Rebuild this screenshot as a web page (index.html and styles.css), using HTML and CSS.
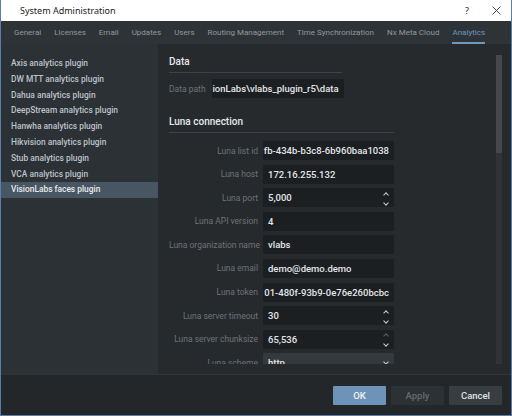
FILE: index.html
```html
<!DOCTYPE html>
<html lang="en">
<head>
    <meta charset="UTF-8">
    <title>System Administration</title>
    <link rel="stylesheet" href="styles.css">
</head>
<body>
    <div class="window">
        <div class="titlebar">
            <span class="title">System Administration</span>
            <div class="controls">
                <span class="help">?</span>
                <svg class="close" width="9" height="9" viewBox="0 0 9 9"><path d="M0.5 0.5L8.5 8.5M8.5 0.5L0.5 8.5" stroke="#333" stroke-width="0.9"/></svg>
            </div>
        </div>

        <nav class="tabs">
            <span class="tab">General</span>
            <span class="tab">Licenses</span>
            <span class="tab">Email</span>
            <span class="tab">Updates</span>
            <span class="tab">Users</span>
            <span class="tab">Routing Management</span>
            <span class="tab">Time Synchronization</span>
            <span class="tab">Nx Meta Cloud</span>
            <span class="tab active">Analytics</span>
        </nav>

        <div class="content">
            <ul class="plugins">
                <li>Axis analytics plugin</li>
                <li>DW MTT analytics plugin</li>
                <li>Dahua analytics plugin</li>
                <li>DeepStream analytics plugin</li>
                <li>Hanwha analytics plugin</li>
                <li>Hikvision analytics plugin</li>
                <li>Stub analytics plugin</li>
                <li>VCA analytics plugin</li>
                <li class="selected">VisionLabs faces plugin</li>
            </ul>

            <section class="settings">
                <div class="viewport">
                    <h3 class="group short">Data</h3>
                    <div class="row data-row">
                        <label>Data path</label>
                        <div class="field clip"><span>ionLabs\vlabs_plugin_r5\data</span></div>
                    </div>

                    <h3 class="group luna">Luna connection</h3>
                    <div class="form">
                        <label>Luna list id</label>
                        <div class="field clip"><span>fb-434b-b3c8-6b960baa1038</span></div>

                        <label>Luna host</label>
                        <div class="field">172.16.255.132</div>

                        <label>Luna port</label>
                        <div class="field spin">5,000 <span class="arrows"><i class="up"></i><i class="down"></i></span></div>

                        <label>Luna API version</label>
                        <div class="field">4</div>

                        <label>Luna organization name</label>
                        <div class="field">vlabs</div>

                        <label>Luna email</label>
                        <div class="field">demo@demo.demo</div>

                        <label>Luna token</label>
                        <div class="field clip"><span>01-480f-93b9-0e76e260bcbc</span></div>

                        <label>Luna server timeout</label>
                        <div class="field spin">30 <span class="arrows"><i class="up"></i><i class="down"></i></span></div>

                        <label>Luna server chunksize</label>
                        <div class="field spin">65,536 <span class="arrows"><i class="up off"></i><i class="down"></i></span></div>

                        <label>Luna scheme</label>
                        <div class="field combo">http <span class="arrows"><i class="down"></i></span></div>
                    </div>
                </div>
                <div class="scrollbar"><div class="thumb"></div></div>
            </section>
        </div>

        <footer class="buttons">
            <button class="btn ok">OK</button>
            <button class="btn apply">Apply</button>
            <button class="btn cancel">Cancel</button>
        </footer>
    </div>
</body>
</html>
```

FILE: styles.css
```css
* {
    box-sizing: border-box;
}

body {
    margin: 0;
    font-family: Roboto, "Liberation Sans", sans-serif;
    background: #fff;
}

.window {
    width: 512px;
    height: 416px;
    display: flex;
    flex-direction: column;
    border: 1px solid #5b7ea8;
    border-top: none;
    background: #262a2d;
    overflow: hidden;
}

/* title bar */
.titlebar {
    height: 21px;
    flex: none;
    background: #fff;
    display: flex;
    align-items: center;
    justify-content: space-between;
    padding: 0 10px 0 19px;
}

.title {
    font-family: "Noto Sans", "Open Sans", sans-serif;
    font-size: 9px;
    color: #222;
}

.controls {
    display: flex;
    align-items: center;
    gap: 23px;
}

.help {
    font-family: "Noto Sans", sans-serif;
    font-size: 9px;
    color: #222;
}

/* tabs */
.tabs {
    height: 23px;
    flex: none;
    background: #2e3338;
    display: flex;
    align-items: stretch;
    padding-left: 13px;
    gap: 13px;
    white-space: nowrap;
}

.tab {
    display: flex;
    align-items: center;
    font-size: 8px;
    color: #8f989f;
    border-bottom: 2px solid transparent;
    padding-top: 2px;
}

.tab.active {
    color: #6d97c0;
    border-bottom-color: #6d97c0;
}

/* main */
.content {
    flex: 1;
    display: flex;
    min-height: 0;
}

.plugins {
    list-style: none;
    margin: 0;
    padding: 12px 0 0;
    width: 157px;
    flex: none;
    background: #2c3135;
}

.plugins li {
    height: 15.8px;
    line-height: 15.8px;
    padding-left: 10px;
    font-size: 8.4px;
    font-weight: 500;
    color: #bcc4ca;
    white-space: nowrap;
}

.plugins li.selected {
    background: #485664;
    color: #e8ecef;
}

.settings {
    flex: 1;
    display: flex;
    padding: 12px 9px 10px 11px;
    background: #262a2d;
}

.viewport {
    flex: 1;
    overflow: hidden;
}

.group {
    margin: 0;
    font-size: 10px;
    font-weight: 500;
    color: #e6e9eb;
    line-height: 12px;
    padding-bottom: 4px;
    border-bottom: 1px solid #3d4348;
}

.group.short {
    width: 173px;
}

.group.luna {
    width: 225px;
    margin-top: 18px;
}

.row {
    display: flex;
    align-items: center;
    gap: 6px;
    margin-top: 6px;
}

.row label,
.form label {
    font-size: 8.5px;
    color: #6c7379;
    white-space: nowrap;
}

.field {
    height: 19px;
    background: #1c1f22;
    color: #e3e6e9;
    font-size: 9.5px;
    font-weight: 500;
    line-height: 19px;
    padding: 0 5px;
    position: relative;
    white-space: nowrap;
}

.data-row .field {
    width: 132px;
}

.field.clip {
    display: flex;
    justify-content: flex-end;
    overflow: hidden;
}

.field.clip span {
    flex: none;
}

.form {
    display: grid;
    grid-template-columns: 89px 131px;
    column-gap: 5px;
    row-gap: 4.6px;
    align-items: center;
    margin-top: 8px;
}

.form label {
    text-align: right;
}

.field.combo {
    background: #34393e;
}

.arrows {
    position: absolute;
    right: 6px;
    top: 0;
    bottom: 0;
    display: flex;
    flex-direction: column;
    justify-content: center;
    gap: 4px;
}

.arrows i {
    display: block;
    width: 4px;
    height: 4px;
    border-left: 1.2px solid #c9ced2;
    border-top: 1.2px solid #c9ced2;
}

.arrows i.up {
    transform: rotate(45deg);
    margin-top: 2px;
}

.arrows i.down {
    transform: rotate(225deg);
}

.arrows i.off {
    border-color: #5a6066;
}

.combo .arrows i.down {
    margin-top: -2px;
}

.scrollbar {
    width: 6px;
    flex: none;
    background: #303438;
    margin-left: 12px;
    margin-top: -1px;
}

.thumb {
    height: 98px;
    background: #45494e;
}

/* buttons */
.buttons {
    height: 41px;
    flex: none;
    display: flex;
    justify-content: flex-end;
    align-items: center;
    gap: 5px;
    padding-right: 9px;
    background: #23272a;
    border-top: 1px solid #30353a;
}

.btn {
    width: 53px;
    height: 19px;
    border: none;
    border-radius: 1px;
    font-family: Roboto, sans-serif;
    font-size: 9.5px;
    font-weight: 500;
    padding: 0;
}

.btn.ok {
    background: #6e93b9;
    color: #f2f5f8;
}

.btn.apply {
    background: #2c3135;
    color: #646b71;
}

.btn.cancel {
    background: #383d42;
    color: #dfe3e6;
}
```
